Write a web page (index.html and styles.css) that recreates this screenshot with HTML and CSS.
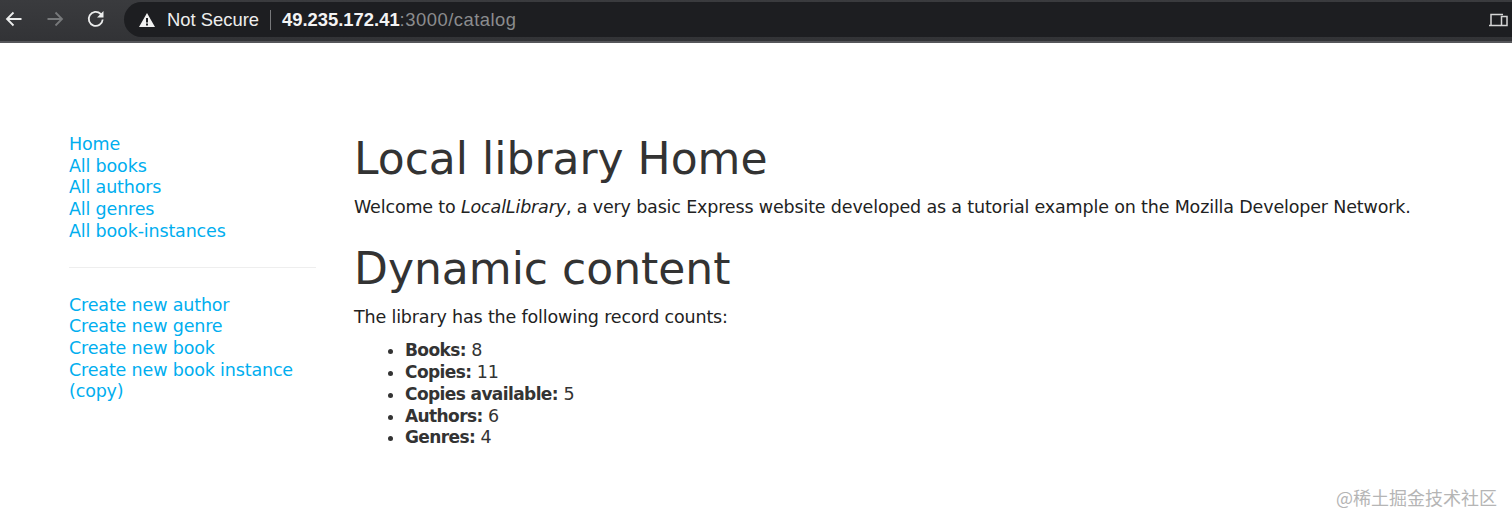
FILE: index.html
```html
<!DOCTYPE html>
<html lang="en">
<head>
<meta charset="utf-8">
<title>Local Library</title>
<link rel="stylesheet" href="styles.css">
</head>
<body>
<header class="toolbar">
  <svg class="nav-icon" width="20" height="20" viewBox="0 0 20 20"><path d="M17.500 10H3M9.500 3.500 3 10l6.500 6.500" fill="none" stroke="#eceded" stroke-width="1.800"/></svg>
  <svg class="nav-icon" width="20" height="20" viewBox="0 0 20 20"><path d="M2.500 10H17M10.500 3.500 17 10l-6.500 6.500" fill="none" stroke="#77797b" stroke-width="1.800"/></svg>
  <svg class="nav-icon" width="20" height="20" viewBox="0 0 20 20"><path d="M16.700 10.500a7 7 0 1 1-2-5.500L16.500 7" fill="none" stroke="#eceded" stroke-width="1.800"/><path d="M17.500 2v6.500H11z" fill="#eceded"/></svg>
  <div class="omnibox">
    <svg class="warn" width="16" height="14" viewBox="0 0 16 14"><path fill-rule="evenodd" d="M8 0 16 14H0zM7 5v4.500h2V5zM7 10.500v2h2v-2z" fill="#f1f1f1"/></svg>
    <span class="secure">Not Secure</span>
    <span class="sep"></span>
    <span class="host">49.235.172.41</span><span class="path">:3000/catalog</span>
    <svg class="devices" width="20" height="14" viewBox="0 0 20 14"><path d="M3 12V1.500h12M1 12.500h12" fill="none" stroke="#d5d5d5" stroke-width="1.500"/><rect x="13.500" y="3.500" width="5.500" height="9" fill="none" stroke="#d5d5d5" stroke-width="1.500"/></svg>
  </div>
</header>
<div class="page">
  <nav class="sidebar">
    <ul class="links">
      <li><a href="#">Home</a></li>
      <li><a href="#">All books</a></li>
      <li><a href="#">All authors</a></li>
      <li><a href="#">All genres</a></li>
      <li><a href="#">All book-instances</a></li>
    </ul>
    <hr class="rule">
    <ul class="links">
      <li><a href="#">Create new author</a></li>
      <li><a href="#">Create new genre</a></li>
      <li><a href="#">Create new book</a></li>
      <li><a href="#">Create new book instance (copy)</a></li>
    </ul>
  </nav>
  <main class="content">
    <h1 class="title">Local library Home</h1>
    <p class="intro">Welcome to <em>LocalLibrary</em>, a very basic Express website developed as a tutorial example on the Mozilla Developer Network.</p>
    <h1 class="title second">Dynamic content</h1>
    <p class="intro">The library has the following record counts:</p>
    <ul class="counts">
      <li><strong>Books:</strong> 8</li>
      <li><strong>Copies:</strong> 11</li>
      <li><strong>Copies available:</strong> 5</li>
      <li><strong>Authors:</strong> 6</li>
      <li><strong>Genres:</strong> 4</li>
    </ul>
  </main>
</div>
<div class="watermark">@稀土掘金技术社区</div>
</body>
</html>
```
FILE: styles.css
```css
* { box-sizing: border-box; }
html, body { margin: 0; height: 100%; }
body {
  position: relative;
  overflow: hidden;
  background: #fff;
  color: #333;
  font-family: "DejaVu Sans", sans-serif;
  font-size: 17.500px;
  letter-spacing: -0.160px;
  line-height: 21.700px;
}
.toolbar {
  display: flex;
  align-items: flex-start;
  height: 43px;
  padding: 0 0 0 4px;
  background: linear-gradient(#3a3b3e, #323336);
  border-bottom: 2px solid #55565a;
  letter-spacing: 0;
}
.nav-icon { flex: none; margin: 9px 21px 0 0; }
.nav-icon:nth-child(3) { margin-right: 18px; }
.omnibox {
  flex: 1;
  display: flex;
  align-items: center;
  height: 35px;
  margin-top: 2px;
  padding-left: 15px;
  background: #1d1e21;
  border-radius: 18px 0 0 18px;
  font-family: "Liberation Sans", sans-serif;
  font-size: 18.400px;
}
.warn { flex: none; margin-right: 12px; }
.secure { color: #eeeeee; }
.sep { width: 1px; height: 20px; margin: 0 11px; background: #77787a; }
.host { color: #f4f4f4; font-weight: 700; }
.path { color: #8b8c8e; letter-spacing: 0.500px; }
.devices { margin-left: auto; margin-right: 4px; }
.page {
  display: flex;
  padding: 91px 0 0 69px;
}
.sidebar { flex: none; width: 247px; margin-right: 38px; }
.links { list-style: none; margin: 0; padding: 0; }
.links a { color: #00aeef; text-decoration: none; }
.rule { margin: 24px 0 27px; border: 0; border-top: 1px solid #eee; }
.content { flex: 1; min-width: 0; }
.title { margin: 0 0 13px; font-size: 44px; line-height: 50px; font-weight: 400; color: #333; letter-spacing: 0; }
.second { margin-top: 25px; }
.intro { margin: 0 0 12px; color: #222; }
.counts { margin: 1px 0 0; padding-left: 51px; }
.counts strong { font-size: 17px; letter-spacing: -0.600px; }
.watermark {
  position: absolute;
  right: 15px;
  bottom: 17px;
  color: #b5b5b5;
  font-family: "Noto Sans CJK SC", sans-serif;
  font-size: 18px;
  line-height: 20px;
  letter-spacing: 0;
}
```
